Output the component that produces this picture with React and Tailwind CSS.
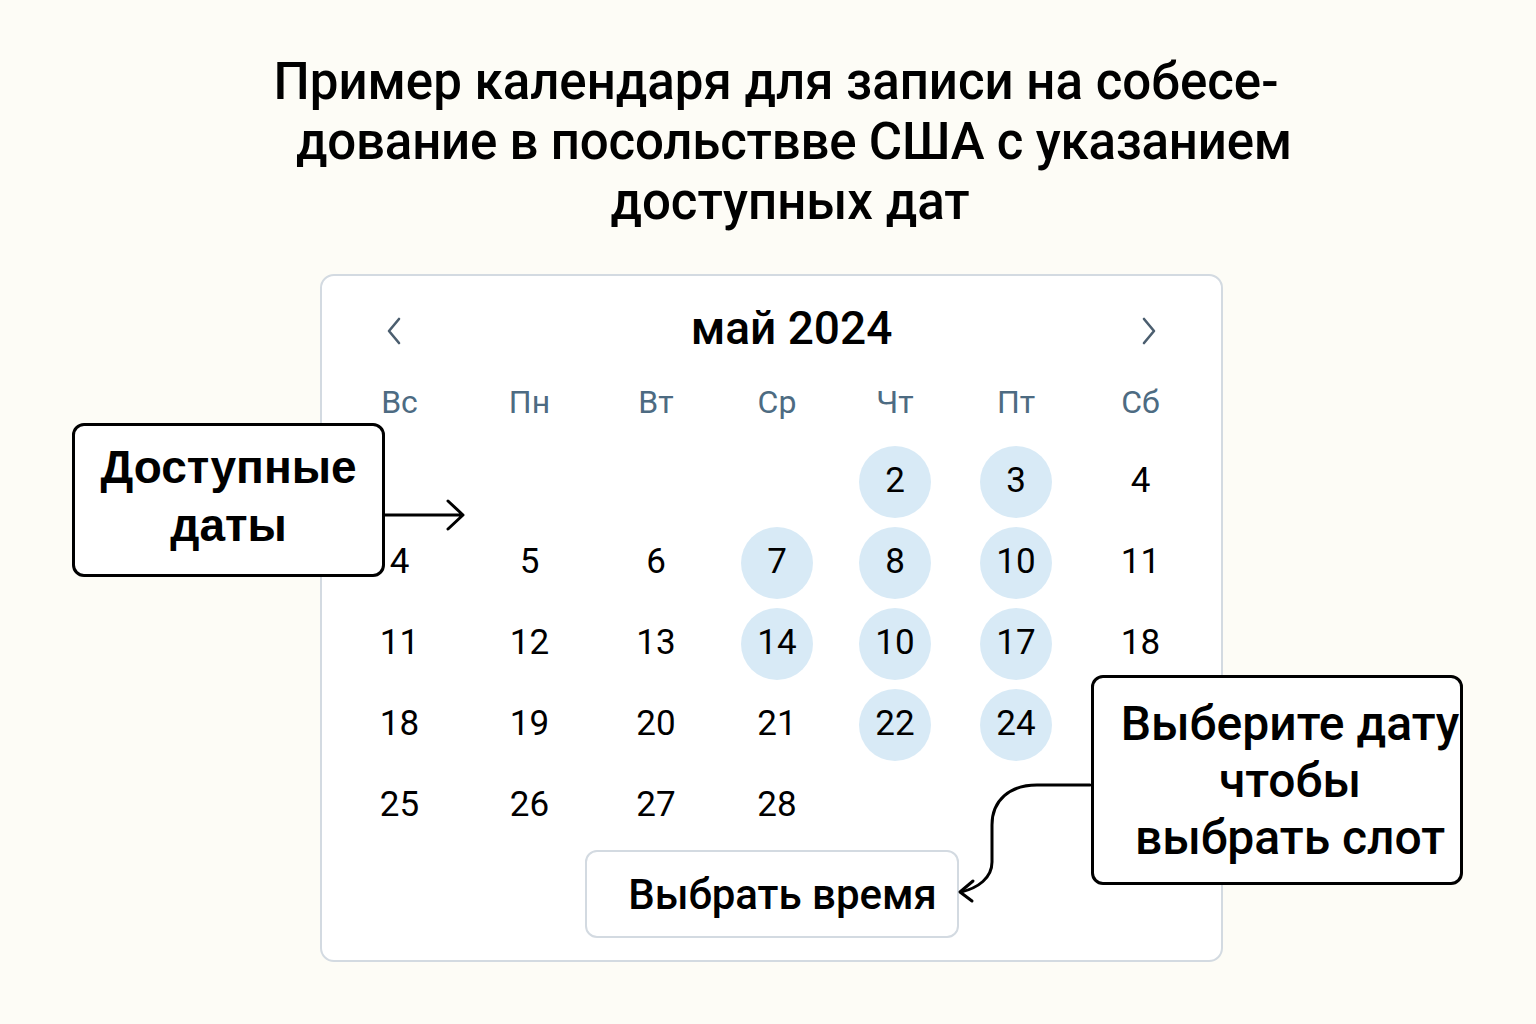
const weekDays = ["Вс", "Пн", "Вт", "Ср", "Чт", "Пт", "Сб"];

// null — пустая клетка, available — доступная дата (подсвечена)
const weeks = [
    [null, null, null, null, { d: 2, available: true }, { d: 3, available: true }, { d: 4 }],
    [{ d: 4 }, { d: 5 }, { d: 6 }, { d: 7, available: true }, { d: 8, available: true }, { d: 10, available: true }, { d: 11 }],
    [{ d: 11 }, { d: 12 }, { d: 13 }, { d: 14, available: true }, { d: 10, available: true }, { d: 17, available: true }, { d: 18 }],
    [{ d: 18 }, { d: 19 }, { d: 20 }, { d: 21 }, { d: 22, available: true }, { d: 24, available: true }, null],
    [{ d: 25 }, { d: 26 }, { d: 27 }, { d: 28 }, null, null, null],
];

const gridCols = "grid grid-cols-[131px_129px_124px_118px_118px_124px_125px]";

function DayCell({ day }) {
    if (!day) return <div className="h-[81px]" />;
    return (
        <div className="h-[81px] flex items-center justify-center">
            <div
                className={`w-[72px] h-[72px] rounded-full flex items-center justify-center text-[35px] text-black ${
                    day.available ? "bg-[#d8eaf6]" : ""
                }`}
            >
                {day.d}
            </div>
        </div>
    );
}

export default function App() {
    return (
        <div
            className="relative w-[1536px] h-[1024px] bg-[#fdfcf6] overflow-hidden"
            style={{ fontFamily: "Roboto, 'Noto Sans', sans-serif" }}
        >
            <h1 className="pt-[52px] text-center text-[51px] leading-[60px] font-medium text-black whitespace-nowrap">
                <span className="block pl-[16px]">Пример календаря для записи на собесе-</span>
                <span className="block pl-[52px] tracking-[-0.2px]">дование в посольствве США с указанием</span>
                <span className="block pl-[44px]">доступных дат</span>
            </h1>

            <div className="mt-[42px] ml-[320px] w-[903px] h-[688px] bg-white border-2 border-[#d3dae1] rounded-[14px] pt-[28px]">
                <div className="h-[48px] flex items-center px-[64px]">
                    <svg width="16" height="28" viewBox="0 0 16 28" fill="none" className="mt-[6px]">
                        <path d="M13 2 L3 14 L13 26" stroke="#4b5e6f" strokeWidth="2.6" strokeLinecap="round" strokeLinejoin="round" />
                    </svg>
                    <div className="flex-1 text-center pl-[40px] text-[46px] font-medium text-black">май 2024</div>
                    <svg width="16" height="28" viewBox="0 0 16 28" fill="none" className="mt-[6px]">
                        <path d="M3 2 L13 14 L3 26" stroke="#4b5e6f" strokeWidth="2.6" strokeLinecap="round" strokeLinejoin="round" />
                    </svg>
                </div>

                <div className="mt-[26px] pl-[12px]">
                    <div className={`${gridCols} h-[40px] items-center`}>
                        {weekDays.map((w) => (
                            <div key={w} className="text-center text-[32px] text-[#4d6b82]">
                                {w}
                            </div>
                        ))}
                    </div>
                    <div className="mt-[23px]">
                        {weeks.map((week, i) => (
                            <div key={i} className={gridCols}>
                                {week.map((day, j) => (
                                    <DayCell key={j} day={day} />
                                ))}
                            </div>
                        ))}
                    </div>
                </div>

                <button className="mt-[4px] mx-auto flex items-center justify-center pl-[22px] w-[374px] h-[88px] border-2 border-[#d3dae1] rounded-[12px] bg-white text-[42px] font-medium text-black">
                    Выбрать время
                </button>
            </div>

            {/* Выноска слева */}
            <div
                className="absolute left-[72px] top-[423px] w-[313px] h-[154px] bg-white border-[3px] border-black rounded-[12px] flex flex-col items-center justify-center pb-[8px] text-[46px] leading-[58px] font-bold text-black"
                style={{ fontFamily: "'Liberation Sans', Arial, sans-serif" }}
            >
                <span>Доступные</span>
                <span>даты</span>
            </div>

            {/* Выноска справа */}
            <div className="absolute left-[1091px] top-[675px] w-[372px] h-[210px] bg-white border-[3px] border-black rounded-[12px] flex flex-col items-center justify-center pl-[26px] text-[48px] leading-[57px] font-medium text-black whitespace-nowrap">
                <span>Выберите дату</span>
                <span>чтобы</span>
                <span>выбрать слот</span>
            </div>

            {/* Стрелки */}
            <svg className="absolute left-0 top-0 pointer-events-none" width="1536" height="1024" fill="none">
                <path d="M385 515 L462 515 M448 501 L463 515 L448 529" stroke="black" strokeWidth="3" strokeLinecap="round" strokeLinejoin="round" />
                <path
                    d="M1090 785 L1037 785 C1010 785 992 800 992 825 L992 862 C992 878 978 888 961 892"
                    stroke="black"
                    strokeWidth="3"
                    strokeLinecap="round"
                />
                <path d="M973 881 L960 892 L972 901" stroke="black" strokeWidth="3" strokeLinecap="round" strokeLinejoin="round" />
            </svg>
        </div>
    );
}
